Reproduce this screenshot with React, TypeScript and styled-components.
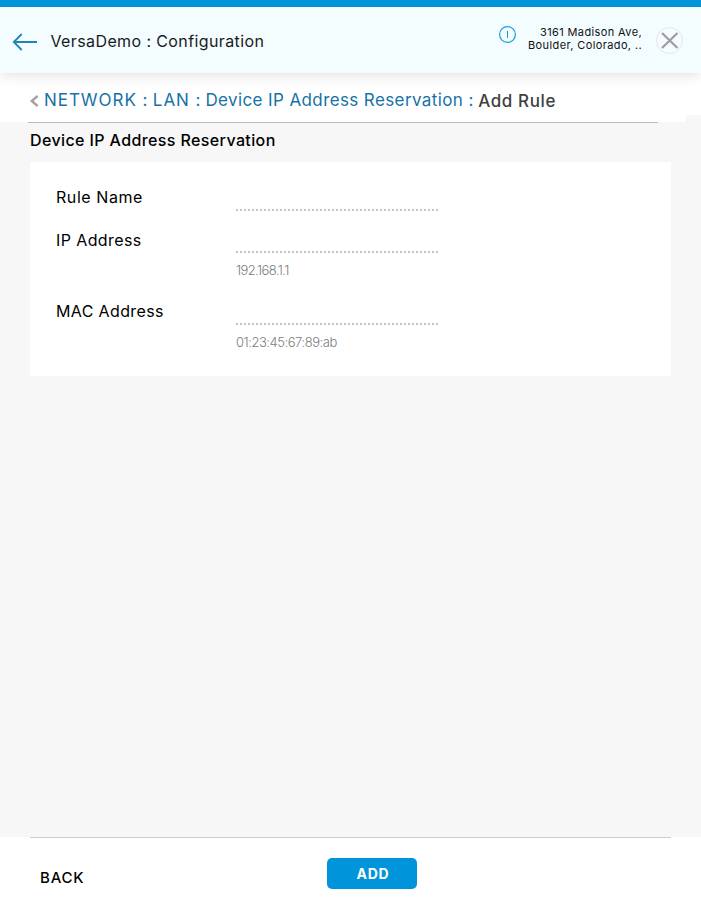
import React from 'react';
import styled, { createGlobalStyle } from 'styled-components';

const GlobalStyle = createGlobalStyle`
  * { box-sizing: border-box; }
  body {
    margin: 0;
    background: #fff;
    font-family: Inter, 'Open Sans', sans-serif;
  }
`;

const Page = styled.div`
  display: flex;
  flex-direction: column;
  height: 100vh;
  min-height: 500px;
  color: #000;
`;

const Header = styled.header`
  display: flex;
  flex: none;
  align-items: flex-start;
  height: 73px;
  padding: 0 17px 0 12px;
  border-top: 7px solid #0095db;
  background: #f3fcff;
  box-shadow: 0 3px 12px rgba(0, 0, 0, 0.11);
  z-index: 1;
`;

const IconButton = styled.button<{ $top: number }>`
  display: flex;
  flex: none;
  margin: ${({ $top }) => $top}px 0 0;
  padding: 0;
  border: 0;
  background: none;
`;

const Title = styled.h1`
  flex: 1;
  margin: 22px 0 0 13.5px;
  font-size: 16px;
  font-weight: 400;
  line-height: 24px;
  letter-spacing: 0.39px;
  color: #1a1a1a;
  white-space: nowrap;
`;

const Address = styled.address`
  width: 125px;
  margin: 19px 14px 0 0;
  font-size: 11px;
  font-style: normal;
  line-height: 13px;
  letter-spacing: 0.38px;
  text-align: right;
  white-space: nowrap;
  color: #111;
`;

const BreadcrumbArea = styled.div`
  flex: none;
  height: 50px;
  padding: 0 43px 0 28px;
  background:
    linear-gradient(#fff, #fff) 0 0 / 100% 42px no-repeat,
    linear-gradient(#fff, #fff) 0 0 / calc(100% - 15px) 49px no-repeat,
    #f7f7f7;
`;

const Breadcrumb = styled.nav`
  display: flex;
  align-items: flex-start;
  height: 50px;
  padding-top: 15px;
  border-bottom: 1px solid #bcbcbc;
  font-size: 17px;
  line-height: 24px;
  white-space: nowrap;
`;

const Chevron = styled.svg`
  flex: none;
  margin: 7px 5px 0 1px;
`;

const Crumb = styled.a<{ $gap: number; $spacing: number }>`
  margin-right: ${({ $gap }) => $gap}px;
  letter-spacing: ${({ $spacing }) => $spacing}px;
  color: #1672a7;
`;

const CurrentCrumb = styled.span`
  padding-top: 1px;
  font-weight: 500;
  letter-spacing: 0.6px;
  color: #404040;
`;

const Content = styled.main`
  flex: 1;
  padding: 5px 30px 0;
  background: #f7f7f7;
`;

const SectionTitle = styled.h2`
  margin: 0 0 10px;
  font-size: 16px;
  font-weight: 500;
  line-height: 24px;
  letter-spacing: 0.39px;
`;

const Card = styled.section`
  height: 214px;
  padding: 23px 26px 0;
  background: #fff;
`;

const Field = styled.div<{ $height: number }>`
  display: grid;
  grid-template-columns: 180px 202px;
  align-items: start;
  height: ${({ $height }) => $height}px;
`;

const Label = styled.label<{ $spacing: number }>`
  font-size: 16px;
  line-height: 24px;
  letter-spacing: ${({ $spacing }) => $spacing}px;
`;

const Input = styled.input<{ $height: number }>`
  display: block;
  width: 100%;
  height: ${({ $height }) => $height}px;
  padding: 0 0 2px;
  border: 0;
  outline: 0;
  font: inherit;
  background: repeating-linear-gradient(90deg, #c4c4c4 0 2px, transparent 2px 4px)
    left bottom / 100% 2px no-repeat;
`;

const Hint = styled.div<{ $spacing: number }>`
  margin-top: 7px;
  font-size: 13px;
  font-weight: 300;
  line-height: 20px;
  letter-spacing: ${({ $spacing }) => $spacing}px;
  color: #7c7c7c;
`;

const Footer = styled.footer`
  display: grid;
  grid-template-columns: 297px 90px;
  align-items: start;
  flex: none;
  height: 79px;
  margin: 0 30px;
  border-top: 1px solid #ccc;
`;

const BackButton = styled.button`
  justify-self: start;
  margin: 28px 0 0 10px;
  padding: 0;
  border: 0;
  background: none;
  font: 500 15px/24px Inter, sans-serif;
  letter-spacing: 0.8px;
  color: #000;
`;

const AddButton = styled.button`
  height: 31px;
  margin-top: 20px;
  padding: 0 0 0 2px;
  border: 0;
  border-radius: 5px;
  background: #0095db;
  font: 700 14px/31px Inter, sans-serif;
  letter-spacing: 0.7px;
  color: #fff;
`;

const InfoIcon = () => (
  <svg width="18" height="18" viewBox="0 0 18 18" fill="none" stroke="#1a9ddd">
    <circle cx="8.5" cy="9.5" r="7.9" strokeWidth="1.2" />
    <path d="M8.5 6v7" />
  </svg>
);

const BackArrow = () => (
  <svg width="25" height="18" viewBox="0 0 25 18" fill="none" stroke="#2383b6" strokeWidth="1.8">
    <path d="M25 9H2M9.7 1 1.8 9l7.9 8" />
  </svg>
);

const CloseIcon = () => (
  <svg width="28" height="28" viewBox="0 0 28 28" fill="none">
    <circle cx="13.5" cy="13.5" r="13" fill="#f6fbfd" stroke="#e2e6e8" />
    <path d="m6 6 15.5 15M21.5 6 6 21" stroke="#999fa2" strokeWidth="2.2" />
  </svg>
);

type FieldSpec = {
  id: string;
  label: string;
  spacing: number;
  height: number;
  inputHeight: number;
  hint?: string;
  hintSpacing?: number;
};

const fields: FieldSpec[] = [
  { id: 'rule', label: 'Rule Name', spacing: 0.56, height: 43, inputHeight: 26 },
  { id: 'ip', label: 'IP Address', spacing: 0.4, height: 71, inputHeight: 25, hint: '192.168.1.1', hintSpacing: -0.6 },
  { id: 'mac', label: 'MAC Address', spacing: 0.37, height: 70, inputHeight: 26, hint: '01:23:45:67:89:ab', hintSpacing: -0.46 },
];

export default function App() {
  return (
    <Page>
      <GlobalStyle />
      <Header>
        <IconButton $top={26} aria-label="Go back"><BackArrow /></IconButton>
        <Title>VersaDemo : Configuration</Title>
        <IconButton $top={18} aria-label="Information"><InfoIcon /></IconButton>
        <Address>3161 Madison Ave,<br />Boulder, Colorado, ..</Address>
        <IconButton $top={20} aria-label="Close"><CloseIcon /></IconButton>
      </Header>
      <BreadcrumbArea>
        <Breadcrumb>
          <Chevron width="10" height="12" viewBox="0 0 10 12" fill="none" stroke="#a2a2a2" strokeWidth="2.3">
            <path d="M8.6 1 2.7 6l5.9 5" />
          </Chevron>
          <Crumb $gap={4.5} $spacing={0.95}>NETWORK :</Crumb>
          <Crumb $gap={4} $spacing={0.95}>LAN :</Crumb>
          <Crumb $gap={4.5} $spacing={0.39}>Device IP Address Reservation :</Crumb>
          <CurrentCrumb>Add Rule</CurrentCrumb>
        </Breadcrumb>
      </BreadcrumbArea>
      <Content>
        <SectionTitle>Device IP Address Reservation</SectionTitle>
        <Card>
          {fields.map((f) => (
            <Field key={f.id} $height={f.height}>
              <Label htmlFor={f.id} $spacing={f.spacing}>{f.label}</Label>
              <div>
                <Input id={f.id} $height={f.inputHeight} />
                {f.hint && <Hint $spacing={f.hintSpacing ?? 0}>{f.hint}</Hint>}
              </div>
            </Field>
          ))}
        </Card>
      </Content>
      <Footer>
        <BackButton>BACK</BackButton>
        <AddButton>ADD</AddButton>
      </Footer>
    </Page>
  );
}
